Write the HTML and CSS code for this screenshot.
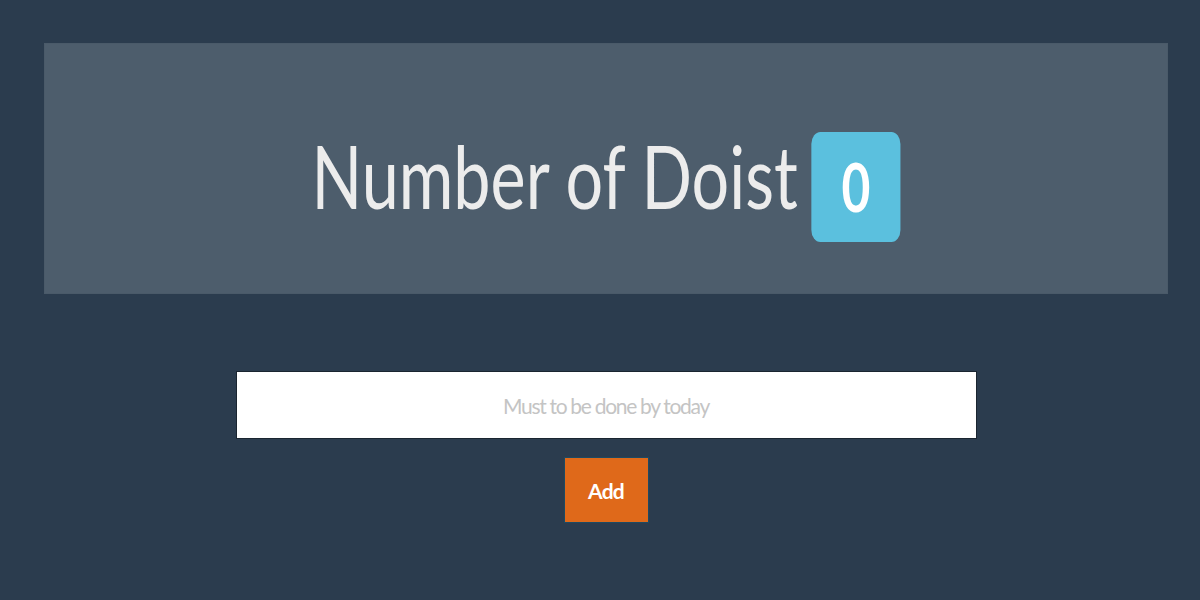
FILE: index.html
```html
<!DOCTYPE html>
<html>
<head>
<meta charset="utf-8">
<link rel="stylesheet" href="styles.css">
</head>
<body>
<div class="page">
  <header class="hero">
    <h1 class="title"><span class="title-text">Number of Doist</span><span class="badge">0</span></h1>
  </header>
  <form class="form">
    <input class="task" type="text" placeholder="Must to be done by today">
    <button class="add" type="button">Add</button>
  </form>
</div>
</body>
</html>
```
FILE: styles.css
```css
html, body {
  margin: 0;
  padding: 0;
  background: #2b3c4e;
  font-family: Lato, "Open Sans", sans-serif;
}
.page {
  padding: 43px 32px 0 44px;
}
.hero {
  box-sizing: border-box;
  height: 251px;
  padding-top: 35px;
  background: #4d5d6c;
  box-shadow: inset 0 0 0 1px #4a5a69;
  display: flex;
  align-items: center;
  justify-content: center;
}
.title {
  margin: 0;
  font-weight: 400;
  font-size: 88px;
  line-height: 1;
  color: #ececec;
  display: flex;
  align-items: flex-start;
  gap: 18px;
  transform: scaleX(0.755);
}
.title-text {
  white-space: nowrap;
}
.badge {
  display: inline-flex;
  align-items: center;
  justify-content: center;
  width: 118px;
  height: 110px;
  margin-top: 1px;
  background: #5bc0de;
  border-radius: 12px;
  color: #fff;
  font-weight: 700;
  font-size: 66px;
  line-height: 1;
}
.form {
  margin-top: 77px;
  display: flex;
  flex-direction: column;
  align-items: center;
  gap: 18px;
}
.task {
  box-sizing: border-box;
  width: 741px;
  height: 68px;
  border: 1px solid #1a2530;
  background: #fff;
  text-align: center;
  font-family: Lato, sans-serif;
  font-size: 21px;
  outline: none;
  letter-spacing: -1.3px;
}
.task::placeholder {
  color: #c4c4c4;
}
.add {
  box-sizing: border-box;
  width: 85px;
  height: 66px;
  border: 1px solid #1d4a63;
  background: #df691a;
  color: #fff;
  font-family: Lato, sans-serif;
  font-weight: 700;
  font-size: 21px;
  letter-spacing: -0.8px;
}
```
